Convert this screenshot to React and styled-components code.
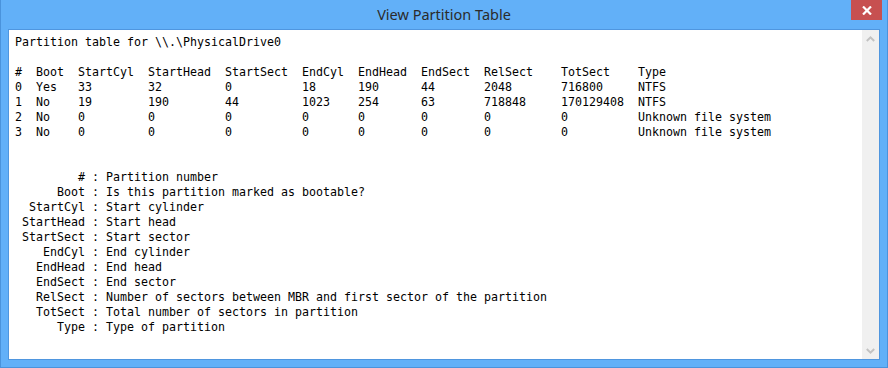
import React from 'react'
import styled, { createGlobalStyle } from 'styled-components'

const GlobalStyle = createGlobalStyle`
  html, body {
    margin: 0;
    padding: 0;
    background: #62b0f8;
  }
`

const widths = [3, 6, 10, 11, 11, 8, 9, 9, 11, 11]

const header = ['#', 'Boot', 'StartCyl', 'StartHead', 'StartSect', 'EndCyl', 'EndHead', 'EndSect', 'RelSect', 'TotSect', 'Type']
const rows = [
  ['0', 'Yes', '33', '32', '0', '18', '190', '44', '2048', '716800', 'NTFS'],
  ['1', 'No', '19', '190', '44', '1023', '254', '63', '718848', '170129408', 'NTFS'],
  ['2', 'No', '0', '0', '0', '0', '0', '0', '0', '0', 'Unknown file system'],
  ['3', 'No', '0', '0', '0', '0', '0', '0', '0', '0', 'Unknown file system'],
]

const legend = [
  ['#', 'Partition number'],
  ['Boot', 'Is this partition marked as bootable?'],
  ['StartCyl', 'Start cylinder'],
  ['StartHead', 'Start head'],
  ['StartSect', 'Start sector'],
  ['EndCyl', 'End cylinder'],
  ['EndHead', 'End head'],
  ['EndSect', 'End sector'],
  ['RelSect', 'Number of sectors between MBR and first sector of the partition'],
  ['TotSect', 'Total number of sectors in partition'],
  ['Type', 'Type of partition'],
]

const line = (cells) => cells.map((c, i) => (i < widths.length ? c.padEnd(widths[i]) : c)).join('')

const text = [
  'Partition table for \\\\.\\PhysicalDrive0',
  '',
  line(header),
  ...rows.map(line),
  '',
  '',
  ...legend.map(([k, v]) => k.padStart(10) + ' : ' + v),
].join('\n')

export default function App() {
  return (
    <>
      <GlobalStyle />
      <Window>
        <TitleBar>
          <Title>View Partition Table</Title>
          <CloseButton>
            <svg width="10" height="9" viewBox="0 0 10 9">
              <path d="M1 0.5 L9 8.5 M9 0.5 L1 8.5" stroke="#fff" strokeWidth="2.2" />
            </svg>
          </CloseButton>
        </TitleBar>
        <Client>
          <TextArea>{text}</TextArea>
          <ScrollBar>
            <Arrow>
              <svg width="9" height="6" viewBox="0 0 9 6">
                <path d="M0.8 5 L4.5 1.4 L8.2 5" fill="none" stroke="#c2c2c2" strokeWidth="2" />
              </svg>
            </Arrow>
            <Arrow>
              <svg width="9" height="6" viewBox="0 0 9 6">
                <path d="M0.8 1 L4.5 4.6 L8.2 1" fill="none" stroke="#c2c2c2" strokeWidth="2" />
              </svg>
            </Arrow>
          </ScrollBar>
        </Client>
      </Window>
    </>
  )
}

const Window = styled.div`
  width: 888px;
  height: 368px;
  box-sizing: border-box;
  border: 1px solid #4a93dc;
  border-top: none;
  background: #62b0f8;
  display: flex;
  flex-direction: column;
  padding: 0 7px 7px 7px;
`

const TitleBar = styled.div`
  height: 29px;
  position: relative;
  display: flex;
  align-items: center;
  justify-content: center;
  flex-shrink: 0;
`

const Title = styled.div`
  font-family: "Noto Sans", "Open Sans", sans-serif;
  font-size: 14.5px;
  color: #2b2b2b;
  margin-top: -1px;
`

const CloseButton = styled.div`
  position: absolute;
  top: 0;
  right: -2px;
  width: 31px;
  height: 20px;
  background: #c75050;
  display: flex;
  align-items: center;
  justify-content: center;
`

const Client = styled.div`
  flex: 1;
  display: flex;
  border: 1px solid #4f96df;
  background: #ffffff;
  min-height: 0;
`

const TextArea = styled.pre`
  flex: 1;
  margin: 0;
  padding: 5px 5px 5px 6px;
  font-family: "DejaVu Sans Mono", "Liberation Mono", monospace;
  font-size: 11.63px;
  line-height: 15px;
  color: #000;
  overflow: hidden;
`

const ScrollBar = styled.div`
  width: 17px;
  background: #f0f0f0;
  display: flex;
  flex-direction: column;
  justify-content: space-between;
  border-left: 1px solid #fff;
`

const Arrow = styled.div`
  height: 17px;
  display: flex;
  align-items: center;
  justify-content: center;
`
